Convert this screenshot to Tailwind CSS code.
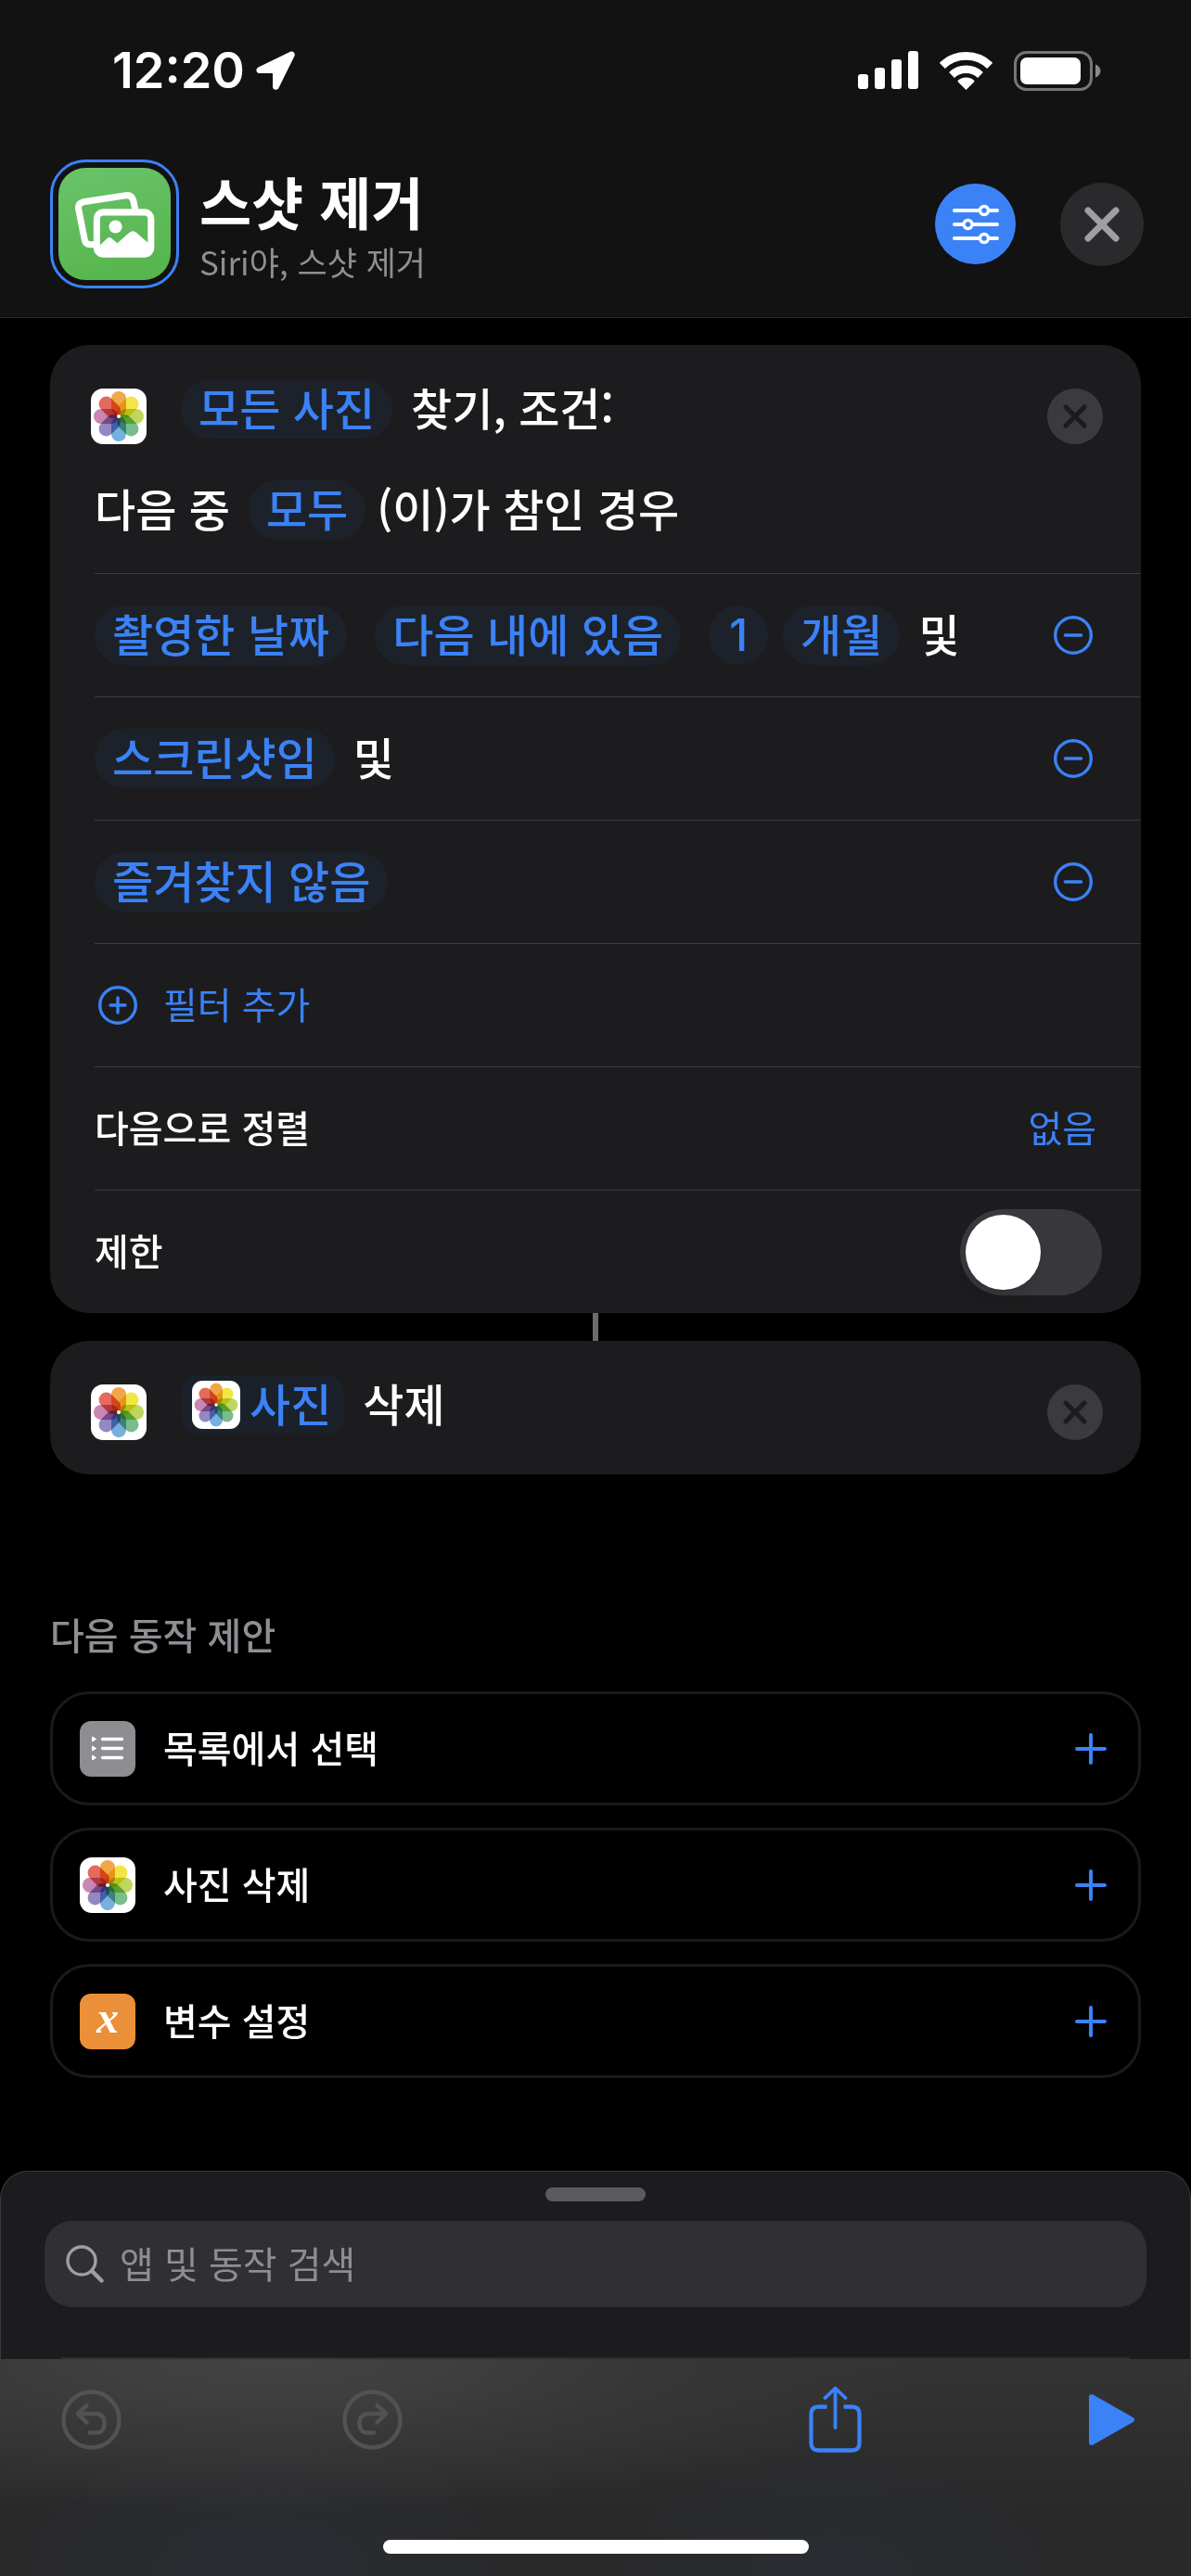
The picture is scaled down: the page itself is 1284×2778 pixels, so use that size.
<!DOCTYPE html>
<html lang="ko" class="bg-black">
<head>
<meta charset="utf-8">
<meta name="viewport" content="width=device-width, initial-scale=1">
<title>스샷 제거</title>
<script src="https://cdn.jsdelivr.net/npm/@tailwindcss/browser@4"></script>
</head>
<body class="flex min-h-screen flex-col bg-black font-['Noto_Sans_CJK_KR',sans-serif] text-white">

<!-- Shared icons -->
<svg class="hidden" aria-hidden="true">
  <symbol id="photos" viewBox="0 0 60 60">
    <rect width="60" height="60" rx="13" fill="#fff"/>
    <g class="isolate">
      <rect class="mix-blend-multiply" x="22" y="3" width="16" height="26.500" rx="8" fill="#efa747"/>
      <rect class="mix-blend-multiply" x="22" y="3" width="16" height="26.500" rx="8" fill="#f3e545" transform="rotate(45 30 30)"/>
      <rect class="mix-blend-multiply" x="22" y="3" width="16" height="26.500" rx="8" fill="#bfd75c" transform="rotate(90 30 30)"/>
      <rect class="mix-blend-multiply" x="22" y="3" width="16" height="26.500" rx="8" fill="#78bd8b" transform="rotate(135 30 30)"/>
      <rect class="mix-blend-multiply" x="22" y="3" width="16" height="26.500" rx="8" fill="#76b0df" transform="rotate(180 30 30)"/>
      <rect class="mix-blend-multiply" x="22" y="3" width="16" height="26.500" rx="8" fill="#9488c2" transform="rotate(225 30 30)"/>
      <rect class="mix-blend-multiply" x="22" y="3" width="16" height="26.500" rx="8" fill="#ca86b2" transform="rotate(270 30 30)"/>
      <rect class="mix-blend-multiply" x="22" y="3" width="16" height="26.500" rx="8" fill="#e36a5c" transform="rotate(315 30 30)"/>
    </g>
    <circle cx="30" cy="30" r="2" fill="#fff"/>
  </symbol>
  <symbol id="remove" viewBox="0 0 60 60">
    <circle cx="30" cy="30" r="30" fill="#3b3b3d"/>
    <path d="M20 20 40 40M40 20 20 40" stroke="#1c1c1e" stroke-width="5" stroke-linecap="round"/>
  </symbol>
  <symbol id="minus" viewBox="0 0 42 42">
    <circle cx="21" cy="21" r="19.300" fill="none" stroke="#3b82f7" stroke-width="3.400"/>
    <path d="M12.500 21h17" stroke="#3b82f7" stroke-width="3.600" stroke-linecap="round"/>
  </symbol>
  <symbol id="plus" viewBox="0 0 34 34">
    <path d="M17 2v30M2 17h30" stroke="#3b82f7" stroke-width="4" stroke-linecap="round"/>
  </symbol>
</svg>

<header class="border-b border-[#29292b] bg-[#121212]">
  <div class="flex h-[152px] items-center justify-between pr-[97px] pl-[121px]">
    <div class="flex items-center gap-3">
      <span class="font-[Inter,sans-serif] text-[54px] leading-[64px] font-semibold">12:20</span>
      <svg class="h-[42px] w-[42px]" viewBox="0 0 42 42" aria-hidden="true"><path d="M36.500 1 2.500 17.500C-.8 19.200 0 24 3.600 24H17.500c.4 0 .5.200.5.600V38.500c0 3.700 4.800 4.500 6.500 1.200L41.400 5.500C42.900 2.200 39.800-.6 36.500 1Z" fill="#fff"/></svg>
    </div>
    <div class="flex items-center gap-[23px]">
      <svg class="h-[42px] w-[65px]" viewBox="0 0 65 42" fill="#fff" aria-hidden="true"><rect y="25" width="11" height="16" rx="3"/><rect x="18" y="18" width="11" height="23" rx="3"/><rect x="36" y="9" width="11" height="32" rx="3"/><rect x="54" width="11" height="41" rx="3"/></svg>
      <svg class="h-[42px] w-[57px]" viewBox="0 0 57 42" fill="none" stroke="#fff" aria-hidden="true"><path d="M2.800 15.800A37 37 0 0 1 54.200 15.800" stroke-width="8.600"/><path d="M13 26A22.500 22.500 0 0 1 44 26" stroke-width="8.400"/><path d="M28.500 42 20 33.400a1.200 1.200 0 0 1 0-1.800 13 13 0 0 1 17 0 1.200 1.200 0 0 1 0 1.800Z" fill="#fff" stroke="none"/></svg>
      <svg class="h-[43px] w-[94px]" viewBox="0 0 94 43" aria-hidden="true"><rect x="1.500" y="1.500" width="82" height="40" rx="12" fill="none" stroke="#767676" stroke-width="3"/><rect x="7" y="7" width="65" height="29" rx="7" fill="#fff"/><path d="M88 14.500c3 1 5.500 3.800 5.500 7s-2.500 6-5.500 7Z" fill="#8a8a8a"/></svg>
    </div>
  </div>

  <div class="flex items-center pt-5 pr-[51px] pb-[31px] pl-[54px]">
    <button class="rounded-[38px] border-[3px] border-[#3b82f7] p-[6px]" aria-label="단축어 아이콘">
      <svg class="h-[121px] w-[121px]" viewBox="0 0 120 120" aria-hidden="true">
        <defs><linearGradient id="leaf" x1="0" y1="0" x2="0.300" y2="1"><stop offset="0" stop-color="#6ac36b"/><stop offset="1" stop-color="#58b64f"/></linearGradient></defs>
        <rect width="120" height="120" rx="29" fill="url(#leaf)"/>
        <g fill="none" stroke="#fff" stroke-width="7" stroke-linejoin="round">
          <path d="M38 82h-4q-5 0-6-5L21.500 44q-1-6 5-7.500L72 29.500q6-1 8 5L82.500 47" stroke-linecap="butt"/>
          <rect x="41" y="47.500" width="58" height="45" rx="7"/>
        </g>
        <ellipse cx="61" cy="63" rx="7" ry="7" fill="#fff"/>
        <path d="M43 84 52 75.500q2.500-2 5 0l6 5L75.500 69.500q4-3.500 8 0L98 82v8q0 4-4 4H46q-4 0-4-4Z" fill="#fff"/>
      </svg>
    </button>
    <div class="ml-[22px] flex-1 pt-1">
      <h1 class="text-[61px] leading-[76px] font-bold">스샷 제거</h1>
      <p class="text-[35px] leading-[54px] font-normal text-[#8e8e93]">Siri야, 스샷 제거</p>
    </div>
    <button class="flex h-[87px] w-[87px] items-center justify-center rounded-full bg-[#3b82f7]" aria-label="설정">
      <svg class="h-[44px] w-[50px]" viewBox="0 0 50 44" fill="#3b82f7" stroke="#fff" stroke-width="4" stroke-linecap="round" aria-hidden="true"><path d="M2 7h46M2 22h46M2 37h46"/><g stroke-width="3.400"><circle cx="34" cy="7" r="4.500"/><circle cx="16.500" cy="22" r="4.500"/><circle cx="34" cy="37" r="4.500"/></g></svg>
    </button>
    <button class="ml-12 flex h-[90px] w-[90px] items-center justify-center rounded-full bg-[#2a2a2c]" aria-label="닫기">
      <svg class="h-[38px] w-[38px]" viewBox="0 0 38 38" stroke="#9f9ea5" stroke-width="7" stroke-linecap="round" aria-hidden="true"><path d="M4 4 34 34M34 4 4 34"/></svg>
    </button>
  </div>
</header>

<main class="px-[54px] pt-[29px] pb-[99px]">
  <!-- Find photos action -->
  <section class="rounded-[42px] bg-[#1c1c1e] text-[48px] leading-[58px] font-medium">
    <div class="pt-[31px] pr-[41px] pb-9 pl-[44px]">
      <div class="flex items-center">
        <svg class="mt-4 h-[60px] w-[60px]" aria-hidden="true"><use href="#photos"/></svg>
        <button class="ml-[37px] h-16 rounded-full bg-[#1d222a] px-[19px] pb-1.5 text-[#3b82f7]">모든 사진</button>
        <span class="ml-5 flex-1 pb-1.5">찾기, 조건:</span>
        <button class="mt-4" aria-label="동작 삭제"><svg class="h-[60px] w-[60px]" aria-hidden="true"><use href="#remove"/></svg></button>
      </div>
      <div class="mt-[39px] ml-1 flex items-center">
        <span class="pb-1.5">다음 중</span>
        <button class="ml-5 h-16 rounded-full bg-[#1d222a] px-[19px] pb-1.5 text-[#3b82f7]">모두</button>
        <span class="ml-3 pb-1.5">(이)가 참인 경우</span>
      </div>
    </div>

    <div class="ml-12 flex h-[133px] items-center border-t border-[#3a3a3c] pr-[52px]">
      <button class="h-16 rounded-full bg-[#1d222a] px-[19px] pb-1.5 text-[#3b82f7]">촬영한 날짜</button>
      <button class="ml-[30px] h-16 rounded-full bg-[#1d222a] px-[19px] pb-1.5 text-[#3b82f7]">다음 내에 있음</button>
      <button class="ml-[30px] h-16 w-16 rounded-full bg-[#1d222a] font-[Inter,sans-serif] text-[#3b82f7]">1</button>
      <button class="ml-4 h-16 rounded-full bg-[#1d222a] px-[19px] pb-1.5 text-[#3b82f7]">개월</button>
      <span class="ml-5 flex-1 pb-1.5">및</span>
      <button aria-label="필터 제거"><svg class="h-[42px] w-[42px]" aria-hidden="true"><use href="#minus"/></svg></button>
    </div>
    <div class="ml-12 flex h-[133px] items-center border-t border-[#3a3a3c] pr-[52px]">
      <button class="h-16 rounded-full bg-[#1d222a] px-[19px] pb-1.5 text-[#3b82f7]">스크린샷임</button>
      <span class="ml-5 flex-1 pb-1.5">및</span>
      <button aria-label="필터 제거"><svg class="h-[42px] w-[42px]" aria-hidden="true"><use href="#minus"/></svg></button>
    </div>
    <div class="ml-12 flex h-[133px] items-center justify-between border-t border-[#3a3a3c] pr-[52px]">
      <button class="h-16 rounded-full bg-[#1d222a] px-[19px] pb-1.5 text-[#3b82f7]">즐겨찾지 않음</button>
      <button aria-label="필터 제거"><svg class="h-[42px] w-[42px]" aria-hidden="true"><use href="#minus"/></svg></button>
    </div>
    <div class="ml-12 flex h-[133px] items-center border-t border-[#3a3a3c]">
      <button class="flex items-center gap-7 pl-1 text-[40px] font-normal text-[#3b82f7]">
        <svg class="h-[42px] w-[42px]" viewBox="0 0 42 42" fill="none" stroke="#3b82f7" stroke-width="3.400" stroke-linecap="round" aria-hidden="true"><circle cx="21" cy="21" r="19.300"/><path d="M21 13v16M13 21h16"/></svg>
        <span class="pb-1">필터 추가</span>
      </button>
    </div>
    <div class="ml-12 flex h-[133px] items-center justify-between border-t border-[#3a3a3c] pr-12 text-[40px]">
      <span class="pb-1">다음으로 정렬</span>
      <button class="pb-1 font-normal text-[#3b82f7]">없음</button>
    </div>
    <div class="ml-12 flex h-[133px] items-center justify-between border-t border-[#3a3a3c] pr-[42px] text-[40px]">
      <label for="limit" class="pb-1">제한</label>
      <input id="limit" type="checkbox" role="switch" class="flex h-[93px] w-[153px] appearance-none items-center rounded-full bg-[#39383d] p-[6px] before:block before:h-[81px] before:w-[81px] before:rounded-full before:bg-white before:shadow-lg before:content-[''] checked:justify-end checked:bg-green-500">
    </div>
  </section>

  <div class="mx-auto h-[30px] w-[6px] bg-[#6c6c70]"></div>

  <!-- Delete photos action -->
  <section class="flex items-center rounded-[42px] bg-[#1c1c1e] pt-[31px] pr-[41px] pb-[37px] pl-[44px] text-[48px] leading-[58px] font-medium">
    <svg class="mt-4 h-[60px] w-[60px]" aria-hidden="true"><use href="#photos"/></svg>
    <button class="ml-[37px] flex h-16 items-center gap-2.5 rounded-[20px] bg-[#1b212a] pr-3.5 pl-3 text-[#3b82f7]">
      <svg class="h-[52px] w-[52px]" aria-hidden="true"><use href="#photos"/></svg>
      <span class="pb-1.5">사진</span>
    </button>
    <span class="ml-5 flex-1 pb-1.5">삭제</span>
    <button class="mt-4" aria-label="동작 삭제"><svg class="h-[60px] w-[60px]" aria-hidden="true"><use href="#remove"/></svg></button>
  </section>

  <h2 class="mt-[142px] text-[40px] leading-[60px] font-medium text-[#8e8e93]">다음 동작 제안</h2>
  <ul class="mt-8 flex flex-col gap-6 text-[40px] leading-[60px] font-medium">
    <li><button class="flex h-[123px] w-full items-center rounded-[42px] border-[3px] border-[#1a1a1b] pr-[34px] pl-[29px]">
      <svg class="h-[60px] w-[60px]" viewBox="0 0 60 60" aria-hidden="true"><rect width="60" height="60" rx="12" fill="#8e8d92"/><path d="M24.500 19.500h21M24.500 29.500h21M24.500 39.500h21" stroke="#fff" stroke-width="3.300" stroke-linecap="round"/><path d="m13.500 17 4 2.500-4 2.500ZM13.500 27l4 2.500-4 2.500ZM13.500 37l4 2.500-4 2.500Z" fill="#fff" stroke="#fff" stroke-linejoin="round"/></svg>
      <span class="ml-[30px] flex-1 pb-1 text-left">목록에서 선택</span>
      <svg class="h-[34px] w-[34px]" aria-hidden="true"><use href="#plus"/></svg>
    </button></li>
    <li><button class="flex h-[123px] w-full items-center rounded-[42px] border-[3px] border-[#1a1a1b] pr-[34px] pl-[29px]">
      <svg class="h-[60px] w-[60px]" aria-hidden="true"><use href="#photos"/></svg>
      <span class="ml-[30px] flex-1 pb-1 text-left">사진 삭제</span>
      <svg class="h-[34px] w-[34px]" aria-hidden="true"><use href="#plus"/></svg>
    </button></li>
    <li><button class="flex h-[123px] w-full items-center rounded-[42px] border-[3px] border-[#1a1a1b] pr-[34px] pl-[29px]">
      <span class="flex h-[60px] w-[60px] items-center justify-center rounded-xl bg-[#eb8f39] pb-2 font-['Liberation_Serif',serif] text-[48px] leading-[48px] font-bold italic">x</span>
      <span class="ml-[30px] flex-1 pb-1 text-left">변수 설정</span>
      <svg class="h-[34px] w-[34px]" aria-hidden="true"><use href="#plus"/></svg>
    </button></li>
  </ul>
</main>

<!-- Search sheet -->
<section class="mt-auto flex flex-col rounded-t-[30px] border border-b-0 border-[#3a3a3c] bg-[#1c1c1e] px-[47px] pt-[17px]">
  <div class="mx-auto h-[15px] w-[108px] rounded-full bg-[#5b5a5f]"></div>
  <label class="mt-[21px] flex h-[93px] items-center rounded-[30px] bg-[#302f34] pr-6 pl-[23px]">
    <svg class="h-[42px] w-[42px]" viewBox="0 0 42 42" fill="none" stroke="#9f9ea5" stroke-linecap="round" aria-hidden="true"><circle cx="17" cy="17" r="15" stroke-width="3.400"/><path d="M28 28 38.500 38.500" stroke-width="4.500"/></svg>
    <input type="search" aria-label="앱 및 동작 검색" placeholder="앱 및 동작 검색" class="ml-4 min-w-0 flex-1 bg-transparent pb-1 text-[40px] leading-[60px] outline-none placeholder:text-[#8e8d93]">
  </label>
  <div class="mx-[18px] mt-[54px] h-0.5 bg-[#2c2c2e]"></div>
</section>

<nav class="bg-[#2a2a2b] bg-[radial-gradient(ellipse_56%_70%_at_23%_0%,#434344_0%,#3f3f40_25%,#363637_60%,transparent_100%),radial-gradient(ellipse_22%_70%_at_22%_100%,#292d33_0%,transparent_100%),radial-gradient(ellipse_20%_60%_at_70%_100%,#292d32_0%,transparent_100%),linear-gradient(#343435,#29292a_70%)] pb-6">
  <div class="flex items-center justify-between pt-[29px] pr-[61px] pl-[66px]">
    <div class="flex items-center gap-[238px]">
      <button aria-label="실행 취소"><svg class="h-[65px] w-[65px]" viewBox="0 0 65 65" fill="none" stroke="#525253" stroke-width="4.500" stroke-linecap="round" stroke-linejoin="round" aria-hidden="true"><circle cx="32.500" cy="32.500" r="30"/><path d="M27.500 17 18 26l9.500 9.500M18.500 26H36.500Q46.500 26 46.500 36.500T36.500 46.500H31"/></svg></button>
      <button aria-label="다시 실행"><svg class="h-[65px] w-[65px]" viewBox="0 0 65 65" fill="none" stroke="#525253" stroke-width="4.500" stroke-linecap="round" stroke-linejoin="round" aria-hidden="true"><circle cx="32.500" cy="32.500" r="30"/><path d="M37.500 17 47 26l-9.500 9.500M46.500 26H28.500Q18.500 26 18.500 36.500T28.500 46.500H34"/></svg></button>
    </div>
    <div class="flex items-center gap-[245px]">
      <button aria-label="공유"><svg class="h-[72px] w-[57px]" viewBox="0 0 57 72" fill="none" stroke="#3b82f7" stroke-width="4.300" aria-hidden="true"><path d="M19.500 22.500H10.500Q2.500 22.500 2.500 30.500V61.500Q2.500 69.500 10.500 69.500H46.500Q54.500 69.500 54.500 61.500V30.500Q54.500 22.500 46.500 22.500H37.500"/><path d="M28.500 45V3M17.500 13 28.500 2.500 39.500 13" stroke-width="3.800" stroke-linecap="round" stroke-linejoin="round"/></svg></button>
      <button aria-label="실행"><svg class="h-[55px] w-[49px]" viewBox="0 0 49 55" aria-hidden="true"><path d="M3 3 46 27.500 3 52Z" fill="#3b82f7" stroke="#3b82f7" stroke-width="6" stroke-linejoin="round"/></svg></button>
    </div>
  </div>
  <div class="mx-auto mt-[94px] h-[15px] w-[459px] rounded-full bg-white"></div>
</nav>
</body>
</html>
